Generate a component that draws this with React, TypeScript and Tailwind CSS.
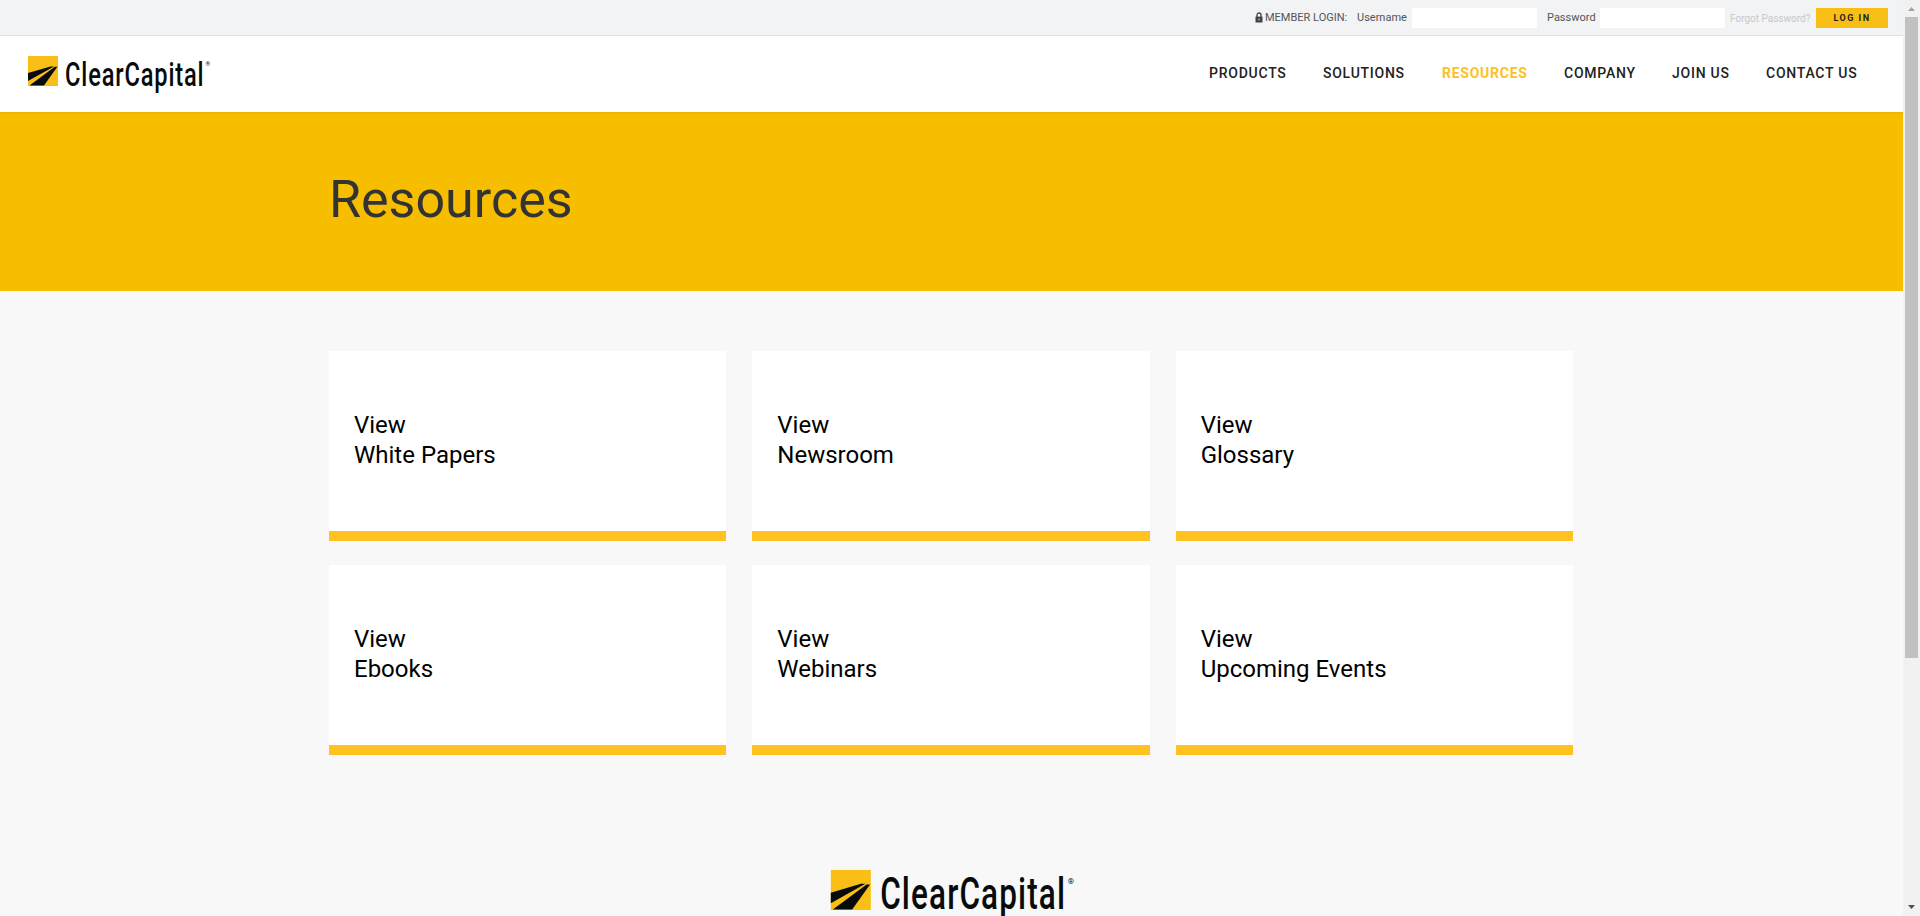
import React from "react";

const navItems = [
  { label: "PRODUCTS", width: "w-[78px]" },
  { label: "SOLUTIONS", width: "w-[83px]" },
  { label: "RESOURCES", width: "w-[86px]", active: true },
  { label: "COMPANY", width: "w-[72px]" },
  { label: "JOIN US", width: "w-[58px]" },
  { label: "CONTACT US", width: "w-[92px]" },
];

const cards = ["White Papers", "Newsroom", "Glossary", "Ebooks", "Webinars", "Upcoming Events"];

function Logo({ className }: { className: string }) {
  return (
    <svg viewBox="0 0 184 42" className={className} fill="#080b0b" fontFamily="Roboto, sans-serif" overflow="visible" aria-label="ClearCapital">
      <rect width="30" height="30" fill="#fabf17" />
      <path d="M0 17 22.5 10.4 26 10.4 0 25z" />
      <path d="M1.5 29.6 26.8 10.8 29.4 10.8 16 29.6z" />
      <text x="37" y="29.6" fontSize="33" fontWeight="500" letterSpacing="1.2" textLength="139.5" lengthAdjust="spacingAndGlyphs">ClearCapital</text>
      <text x="177.6" y="10.4" fontSize="6">®</text>
    </svg>
  );
}

export default function App() {
  return (
    <div className="flex h-[916px] w-[1920px] overflow-hidden bg-[#f8f8f8] font-['Roboto',sans-serif]">
      <div className="flex min-w-0 flex-1 flex-col">
        <div className="flex h-[35px] shrink-0 items-center justify-end bg-[#f2f3f5] pr-[15px] pt-px text-[11px] text-[#555]">
          <svg viewBox="0 0 8 11" className="mb-[2px] mr-[2px] h-[11px] w-[8px]">
            <path d="M2 5V3a2 2 0 0 1 4 0v2" fill="none" stroke="#444" strokeWidth="1.3" />
            <path d="M.5 4.6h7v5.9h-7z" fill="#444" />
            <path d="M3.5 6.5h1v2h-1z" fill="#ccc" />
          </svg>
          <span className="w-[92px] whitespace-nowrap">MEMBER LOGIN:</span>
          <label htmlFor="user" className="w-[55px]">Username</label>
          <input id="user" className="mr-[10px] h-5 w-[125px] bg-white" />
          <label htmlFor="pass" className="w-[53px]">Password</label>
          <input id="pass" type="password" className="mr-[5px] h-5 w-[125px] bg-white" />
          <a className="w-[86px] whitespace-nowrap text-[10px] text-[#c8c8c8]">Forgot Password?</a>
          <button className="h-5 w-[72px] bg-[#f9be16] pt-px text-[9px] font-bold tracking-[1.5px] text-[#222]">LOG IN</button>
        </div>
        <header className="flex h-[77px] shrink-0 justify-between border-t border-[#dddfe1] bg-white pl-7 pr-[45px]">
          <Logo className="mt-5 h-[42px] w-[184px]" />
          <nav className="flex items-center gap-9 pb-[2px] text-sm font-medium tracking-[0.75px] text-[#222]">
            {navItems.map((item) => (
              <a key={item.label} className={`${item.width} whitespace-nowrap ${item.active ? "font-bold text-[#fcc11f]" : ""}`}>
                {item.label}
              </a>
            ))}
          </nav>
        </header>
        <section className="h-[179px] shrink-0 bg-[#f7be00] bg-linear-to-b from-[#e9b300] to-[#f7be00] to-[3px] pl-[329px] pt-[57px]">
          <h1 className="text-[52px] leading-[62px] text-[#333]">Resources</h1>
        </section>
        <main className="flex flex-col items-start pl-[329px]">
          <div className="mt-[60px] grid w-[1244px] grid-cols-3 gap-x-[26px] gap-y-6">
            {cards.map((title) => (
              <a key={title} className="h-[190px] border-b-10 border-[#ffc220] bg-white pl-[25px] pt-[59px] text-2xl leading-[30px] text-black">
                View
                <br />
                {title}
              </a>
            ))}
          </div>
          <Logo className="ml-[500.5px] mt-[115px] h-[56px] w-[247px]" />
        </main>
      </div>
      <aside className="flex w-[17px] flex-col items-center bg-[#f1f1f1]">
        <svg viewBox="0 0 17 17" className="size-[17px]">
          <path d="M5 11h7L8.5 7z" fill="#a3a3a3" />
        </svg>
        <div className="h-[641px] w-[13px] bg-[#c1c1c1]" />
        <svg viewBox="0 0 17 17" className="mt-auto size-[17px]">
          <path d="M5 6h7L8.5 10z" fill="#505050" />
        </svg>
      </aside>
    </div>
  );
}
